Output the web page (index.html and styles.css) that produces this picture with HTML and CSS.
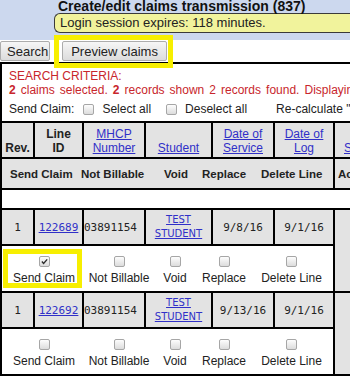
FILE: index.html
```html
<!DOCTYPE html>
<html lang="en">
<head>
    <meta charset="UTF-8">
    <title>Create/edit claims transmission (837)</title>
    <link rel="stylesheet" href="styles.css">
</head>
<body>
    <!-- Hlavicka stranky -->
    <div class="masthead">
        <h1>Create/edit claims transmission (837)</h1>
        <div class="session">Login session expires: 118 minutes.</div>
    </div>

    <div class="toolbar">
        <button class="btn btn-search">Search</button>
        <span class="mark mark-btn"><button class="btn">Preview claims</button></span>
    </div>

    <div class="panel">
        <div class="criteria">
            <div class="crit-red">SEARCH CRITERIA:</div>
            <div class="crit-red crit-count"><b>2</b> claims selected. <b>2</b> records shown 2 records found. Displaying 1 - 2</div>
            <div class="crit-select">
                <span>Send Claim:</span>
                <span class="cb crit-cb"></span>
                <span>Select all</span>
                <span class="cb crit-cb crit-cb-2"></span>
                <span>Deselect all</span>
                <span class="recalc">Re-calculate "Not Billable"</span>
            </div>
        </div>

        <table class="claims">
            <thead>
                <tr class="head-cols">
                    <th class="w-rev">Rev.</th>
                    <th class="w-line">Line<br>ID</th>
                    <th class="w-mhcp"><a href="#">MHCP<br>Number</a></th>
                    <th class="w-student"><a href="#">Student</a></th>
                    <th class="w-dos"><a href="#">Date of<br>Service</a></th>
                    <th class="w-dol"><a href="#">Date of<br>Log</a></th>
                    <th class="w-side side-head side-status"><a href="#">Status</a></th>
                </tr>
                <tr class="head-actions">
                    <th colspan="6">
                        <div class="action-heads">
                            <span>Send Claim</span>
                            <span>Not Billable</span>
                            <span>Void</span>
                            <span>Replace</span>
                            <span>Delete Line</span>
                        </div>
                    </th>
                    <th class="side-head">Actions</th>
                </tr>
            </thead>
            <tbody>
                <tr class="spacer"><td colspan="7"></td></tr>

                <tr class="line">
                    <td>1</td>
                    <td><a href="#">122689</a></td>
                    <td class="mhcp">03891154</td>
                    <td><a href="#" class="student">TEST<br>STUDENT</a></td>
                    <td>9/8/16</td>
                    <td>9/1/16</td>
                    <td rowspan="2" class="side"></td>
                </tr>
                <tr class="choices">
                    <td colspan="6">
                        <div class="choice-row">
                            <label class="choice mark mark-cb"><span class="cb cb-on"><svg viewBox="0 0 11 11"><path d="M2.3 5.6 L4.4 7.8 L8.8 2.9" fill="none" stroke="#2b2b2b" stroke-width="1.7"/></svg></span>Send Claim</label>
                            <label class="choice"><span class="cb"></span>Not Billable</label>
                            <label class="choice"><span class="cb"></span>Void</label>
                            <label class="choice"><span class="cb"></span>Replace</label>
                            <label class="choice"><span class="cb"></span>Delete Line</label>
                        </div>
                    </td>
                </tr>

                <tr class="line">
                    <td>1</td>
                    <td><a href="#">122692</a></td>
                    <td class="mhcp">03891154</td>
                    <td><a href="#" class="student">TEST<br>STUDENT</a></td>
                    <td>9/13/16</td>
                    <td>9/1/16</td>
                    <td rowspan="2" class="side"></td>
                </tr>
                <tr class="choices">
                    <td colspan="6">
                        <div class="choice-row">
                            <label class="choice"><span class="cb"></span>Send Claim</label>
                            <label class="choice"><span class="cb"></span>Not Billable</label>
                            <label class="choice"><span class="cb"></span>Void</label>
                            <label class="choice"><span class="cb"></span>Replace</label>
                            <label class="choice"><span class="cb"></span>Delete Line</label>
                        </div>
                    </td>
                </tr>
            </tbody>
        </table>
    </div>
</body>
</html>
```

FILE: styles.css
```css
body {
    margin: 0;
    overflow: hidden;
    background: #fff;
    color: #222;
    font-family: "Liberation Sans", Arial, sans-serif;
}
a {
    color: #3030c8;
}
/* Hlavicka */
.masthead {
    height: 40px;
    background: #ccd8ee;
    padding-left: 54px;
    overflow: hidden;
}
.masthead h1 {
    margin: 0;
    padding-left: 4px;
    font-size: 14px;
    line-height: 12px;
    white-space: nowrap;
    color: #111;
}
.session {
    margin-top: 1px;
    width: 330px;
    height: 20px;
    box-sizing: border-box;
    border: 1px solid #3a3a3a;
    border-right: 0;
    border-radius: 6px 0 0 6px;
    background: #f1f39c;
    padding-left: 5px;
    font-size: 13px;
    line-height: 18px;
    white-space: nowrap;
}
/* Tlacitka */
.toolbar {
    display: flex;
    gap: 12px;
    padding-top: 1px;
    height: 22px;
    box-sizing: border-box;
}
.btn {
    height: 20px;
    font: 13px "Liberation Sans", Arial, sans-serif;
    color: #222;
    border: 1px solid #acacac;
    border-radius: 2px;
    background: linear-gradient(#f6f6f6, #dcdcdc);
    padding: 0 8px;
}
.btn-search {
    padding: 0 1px 0 6px;
}
/* Zlute zvyrazneni */
.mark {
    position: relative;
}
.mark::after {
    content: "";
    position: absolute;
    border: 5px solid #f7ef00;
    pointer-events: none;
}
.mark-btn {
    display: flex;
}
.mark-btn::after {
    top: -6px;
    left: -8px;
    right: -6px;
    bottom: -6px;
}
.mark-cb::after {
    top: 3px;
    left: 1px;
    right: 4px;
    bottom: -3px;
}
/* Panel s kriterii */
.panel {
    border-top: 2px solid #000;
    border-left: 2px solid #000;
}
.criteria {
    padding: 5px 0 0 7px;
    font-size: 12px;
    line-height: 14px;
    white-space: nowrap;
}
.crit-red {
    color: #c8262c;
}
.crit-count {
    word-spacing: 1.7px;
}
.crit-select {
    display: flex;
    align-items: center;
    height: 24px;
}
.crit-select span {
    flex-shrink: 0;
}
.cb {
    display: inline-block;
    width: 11px;
    height: 11px;
    box-sizing: border-box;
    border: 1px solid #a6a6a6;
    border-radius: 2px;
    background: linear-gradient(#fdfdfd, #dcdcdc);
}
.cb svg {
    display: block;
    width: 9px;
    height: 9px;
}
.crit-cb {
    margin: 0 8px 0 9px;
}
.crit-cb-2 {
    margin-left: 15px;
}
.recalc {
    margin-left: 29px;
}
/* Tabulka */
.claims {
    border-collapse: separate;
    border-spacing: 0;
    table-layout: fixed;
    width: 393px;
    border-top: 2px solid #000;
    font-size: 12px;
}
.claims th,
.claims td {
    box-sizing: border-box;
    padding: 0;
    border-right: 2px solid #000;
    border-bottom: 2px solid #000;
}
.w-rev { width: 33px; }
.w-line { width: 49px; }
.w-mhcp { width: 62px; }
.w-student { width: 67px; }
.w-dos { width: 62px; }
.w-dol { width: 60px; }
.w-side { width: 60px; }

.head-cols th {
    height: 36px;
    background: #e3e3e3;
    vertical-align: bottom;
    padding-bottom: 2px;
    line-height: 14px;
    text-align: center;
}
.head-cols a {
    font-weight: normal;
}
.claims th.side-head {
    text-align: left;
    padding-left: 3px;
    white-space: nowrap;
}
.claims th.side-status {
    padding-left: 9px;
}
.head-actions th {
    height: 31px;
    background: #e3e3e3;
    font-size: 11.5px;
}
.action-heads {
    display: grid;
    grid-template-columns: 71px 83px 38px 59px auto;
    padding-left: 8px;
    text-align: left;
    white-space: nowrap;
}
.spacer td {
    height: 20px;
}
.line td {
    height: 36px;
    background: #e3e3e3;
    text-align: center;
    font-family: "DejaVu Sans Mono", monospace;
    font-size: 11px;
}
.line td.mhcp {
    text-align: left;
}
.line .student {
    font-family: "DejaVu Sans", sans-serif;
    font-size: 10px;
    line-height: 14px;
}
.line td.side {
    background: #e3e3e3;
}
.choices td {
    height: 47px;
    vertical-align: top;
}
.choice-row {
    display: grid;
    grid-template-columns: 84px 66px 46px 52px 83px;
}
.choice {
    display: flex;
    flex-direction: column;
    align-items: center;
    line-height: 14px;
    white-space: nowrap;
}
.choice .cb {
    margin: 10px 0 4px;
}
```
